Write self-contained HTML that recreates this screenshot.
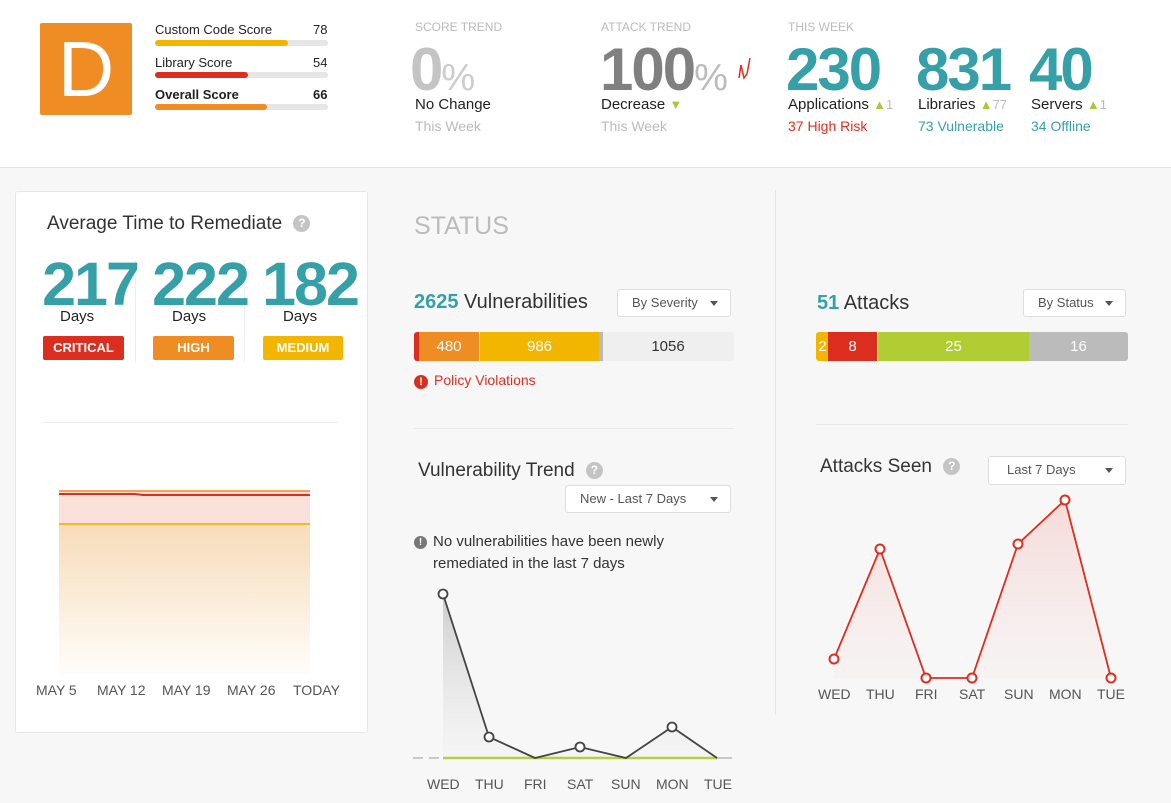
<!DOCTYPE html>
<html><head><meta charset="utf-8"><style>
*{margin:0;padding:0;box-sizing:border-box}
body{width:1171px;height:803px;background:#f7f7f7;font-family:"Liberation Sans",sans-serif;color:#333;position:relative;overflow:hidden}
.a{position:absolute;white-space:nowrap}
.hdr{position:absolute;left:0;top:0;width:1171px;height:168px;background:#fff;border-bottom:1px solid #e4e4e4}
.bar{position:absolute;height:6px;border-radius:3px;background:#e6e6e6;width:173px;left:155px}
.bar i{display:block;height:6px;border-radius:3px}
.sm{font-size:13px;color:#222}
.cap{font-size:12px;color:#bbb}
.teal{color:#35a0a8}
.big{font-size:60px;font-weight:bold;letter-spacing:-2px;line-height:60px}
.dd{position:absolute;background:#fff;border:1px solid #ddd;border-radius:3px;font-size:13px;color:#555;padding-left:14px;line-height:26px}
.dd:after{content:"";position:absolute;right:12px;top:11px;border-left:4px solid transparent;border-right:4px solid transparent;border-top:5px solid #555}
.q{display:inline-block;width:17px;height:17px;border-radius:50%;background:#c4c4c4;color:#fff;font-size:12px;font-weight:bold;text-align:center;line-height:17px;vertical-align:middle}
.badge{position:absolute;top:336px;height:24px;color:#fff;font-weight:bold;font-size:13px;text-align:center;line-height:24px;border-radius:2px}
.seg{position:absolute;top:332px;height:29px;color:#fff;font-size:15px;text-align:center;line-height:29px}
.lbl{font-size:14px;color:#555}
</style></head><body>
<div class="hdr"></div>
<div class="a" style="left:40px;top:23px;width:92px;height:92px;background:#ef8c24;border-radius:2px;color:#fff;font-size:78px;text-align:center;line-height:92px">D</div>
<div class="a sm" style="left:155px;top:22px">Custom Code Score</div><div class="a sm" style="left:313px;top:22px">78</div>
<div class="bar" style="top:40px"><i style="width:133px;background:#f2b500"></i></div>
<div class="a sm" style="left:155px;top:55px">Library Score</div><div class="a sm" style="left:313px;top:55px">54</div>
<div class="bar" style="top:72px"><i style="width:93px;background:#dc2e1f"></i></div>
<div class="a sm" style="left:155px;top:87px;font-weight:bold">Overall Score</div><div class="a sm" style="left:313px;top:87px;font-weight:bold">66</div>
<div class="bar" style="top:104px"><i style="width:112px;background:#ef8c24"></i></div>

<div class="a cap" style="left:415px;top:20px">SCORE TREND</div>
<div class="a big" style="left:410px;top:40px;color:#c4c4c4">0<span style="font-size:38px;font-weight:normal;color:#ccc">%</span></div>
<div class="a" style="left:415px;top:96px;font-size:15px;color:#222">No Change</div>
<div class="a" style="left:415px;top:118px;font-size:14px;color:#bbb">This Week</div>

<div class="a cap" style="left:601px;top:20px">ATTACK TREND</div>
<div class="a big" style="left:600px;top:40px;color:#808080">100<span style="font-size:38px;font-weight:normal;color:#bbb">%</span></div>
<svg class="a" style="left:736px;top:54px" width="20" height="28"><polyline points="3,24 5,11 8,24 11,20 14,4" fill="none" stroke="#dc2e1f" stroke-width="1.5"/></svg>
<div class="a" style="left:601px;top:96px;font-size:15px;color:#222">Decrease <span style="color:#a8c83a;font-size:13px">▼</span></div>
<div class="a" style="left:601px;top:118px;font-size:14px;color:#bbb">This Week</div>

<div class="a cap" style="left:788px;top:20px">THIS WEEK</div>
<div class="a big teal" style="left:786px;top:40px">230</div>
<div class="a big teal" style="left:916px;top:40px">831</div>
<div class="a big teal" style="left:1029px;top:40px">40</div>
<div class="a" style="left:788px;top:96px;font-size:15px;color:#222">Applications <span style="color:#a8c83a;font-size:13px">▲</span><span style="color:#bbb;font-size:13px">1</span></div>
<div class="a" style="left:918px;top:96px;font-size:15px;color:#222">Libraries <span style="color:#a8c83a;font-size:13px">▲</span><span style="color:#bbb;font-size:13px">77</span></div>
<div class="a" style="left:1031px;top:96px;font-size:15px;color:#222">Servers <span style="color:#a8c83a;font-size:13px">▲</span><span style="color:#bbb;font-size:13px">1</span></div>
<div class="a" style="left:788px;top:118px;font-size:14px;color:#dc2e1f">37 High Risk</div>
<div class="a teal" style="left:918px;top:118px;font-size:14px">73 Vulnerable</div>
<div class="a teal" style="left:1031px;top:118px;font-size:14px">34 Offline</div>

<!-- left card -->
<div class="a" style="left:15px;top:191px;width:353px;height:542px;background:#fff;border:1px solid #e6e6e6;border-radius:3px"></div>
<div class="a" style="left:47px;top:213px;font-size:19px;color:#333">Average Time to Remediate <span class="q" style="margin-left:6px">?</span></div>
<div class="a" style="left:135px;top:260px;width:1px;height:102px;background:#eee"></div>
<div class="a" style="left:244px;top:260px;width:1px;height:102px;background:#eee"></div>
<div class="a teal" style="left:40px;top:253px;width:100px;text-align:center;font-size:61px;font-weight:bold;letter-spacing:-2px;line-height:62px">217</div>
<div class="a teal" style="left:150px;top:253px;width:100px;text-align:center;font-size:61px;font-weight:bold;letter-spacing:-2px;line-height:62px">222</div>
<div class="a teal" style="left:260px;top:253px;width:100px;text-align:center;font-size:61px;font-weight:bold;letter-spacing:-2px;line-height:62px">182</div>
<div class="a" style="left:60px;top:308px;font-size:15px;color:#222">Days</div>
<div class="a" style="left:172px;top:308px;font-size:15px;color:#222">Days</div>
<div class="a" style="left:283px;top:308px;font-size:15px;color:#222">Days</div>
<div class="badge" style="left:43px;width:81px;background:#dc2e1f">CRITICAL</div>
<div class="badge" style="left:153px;width:81px;background:#ef8c24">HIGH</div>
<div class="badge" style="left:263px;width:80px;background:#f2b500">MEDIUM</div>
<div class="a" style="left:42px;top:422px;width:296px;height:1px;background:#eee"></div>
<svg class="a" style="left:59px;top:488px" width="252" height="186">
<defs><linearGradient id="og" x1="0" y1="0" x2="0" y2="1"><stop offset="0" stop-color="#f5d3a8" stop-opacity=".8"/><stop offset="1" stop-color="#f5d3a8" stop-opacity=".05"/></linearGradient></defs>
<rect x="0" y="3" width="251" height="33" fill="#f9e0d8"/>
<rect x="0" y="36" width="251" height="150" fill="url(#og)"/>
<line x1="0" y1="3" x2="251" y2="3" stroke="#ef8c24" stroke-width="1.5"/>
<polyline points="0,6 76,6 84,7 251,7" fill="none" stroke="#dc2e1f" stroke-width="2"/>
<line x1="0" y1="36" x2="251" y2="36" stroke="#f2a800" stroke-width="1.5"/>
</svg>
<div class="a lbl" style="left:36px;top:682px">MAY 5</div>
<div class="a lbl" style="left:97px;top:682px">MAY 12</div>
<div class="a lbl" style="left:162px;top:682px">MAY 19</div>
<div class="a lbl" style="left:227px;top:682px">MAY 26</div>
<div class="a lbl" style="left:293px;top:682px">TODAY</div>

<!-- status -->
<div class="a" style="left:414px;top:212px;font-size:25px;color:#bbb">STATUS</div>
<div class="a" style="left:414px;top:291px;font-size:20px;color:#333"><b class="teal">2625</b> Vulnerabilities</div>
<div class="dd" style="left:617px;top:289px;width:114px;height:28px">By Severity</div>
<div class="seg" style="left:414px;width:606px;width:320px;background:#efefef;border-radius:3px"></div>
<div class="seg" style="left:414px;width:6px;background:#dc2e1f;border-radius:3px 0 0 3px"></div>
<div class="seg" style="left:419px;width:60px;background:#ef8c24">480</div>
<div class="seg" style="left:480px;width:119px;background:#f2b500">986</div>
<div class="seg" style="left:599px;width:4px;background:#bbb"></div>
<div class="seg" style="left:603px;width:130px;color:#333">1056</div>
<div class="a" style="left:414px;top:372px;font-size:14px;color:#dc2e1f"><span style="display:inline-block;width:14px;height:14px;border-radius:50%;background:#dc2e1f;color:#fff;font-size:11px;font-weight:bold;text-align:center;line-height:14px;margin-right:6px">!</span>Policy Violations</div>
<div class="a" style="left:414px;top:428px;width:320px;height:1px;background:#e8e8e8"></div>
<div class="a" style="left:418px;top:460px;font-size:19px;color:#333">Vulnerability Trend <span class="q" style="margin-left:6px">?</span></div>
<div class="dd" style="left:565px;top:485px;width:166px;height:28px">New - Last 7 Days</div>
<div class="a" style="left:414px;top:531px;font-size:15px;color:#333;line-height:22px"><span style="display:inline-block;width:13px;height:13px;border-radius:50%;background:#777;color:#fff;font-size:10px;font-weight:bold;text-align:center;line-height:13px;margin-right:6px;vertical-align:1px">!</span>No vulnerabilities have been newly<br><span style="padding-left:19px">remediated in the last 7 days</span></div>
<svg class="a" style="left:400px;top:580px" width="340" height="190">
<defs><linearGradient id="gg" x1="0" y1="0" x2="0" y2="1"><stop offset="0" stop-color="#bbb" stop-opacity=".7"/><stop offset="1" stop-color="#ddd" stop-opacity=".1"/></linearGradient>
<linearGradient id="rg" x1="0" y1="0" x2="0" y2="1"><stop offset="0" stop-color="#f3c8c4" stop-opacity=".6"/><stop offset="1" stop-color="#f3dcda" stop-opacity=".15"/></linearGradient></defs>
<polygon points="43,14 89,157 135,178 180,167 226,178 272,147 317,178 43,178" fill="url(#gg)"/>
<line x1="13" y1="178" x2="43" y2="178" stroke="#999" stroke-dasharray="10,6"/>
<line x1="317" y1="178" x2="332" y2="178" stroke="#999"/>
<line x1="43" y1="178" x2="317" y2="178" stroke="#b5cf3e" stroke-width="2.5"/>
<polyline points="43,14 89,157 135,178 180,167 226,178 272,147 317,178" fill="none" stroke="#444" stroke-width="1.8"/>
<g fill="#fff" stroke="#444" stroke-width="1.8"><circle cx="43" cy="14" r="4.5"/><circle cx="89" cy="157" r="4.5"/><circle cx="180" cy="167" r="4.5"/><circle cx="272" cy="147" r="4.5"/></g>
</svg>
<div class="a lbl" style="left:427px;top:776px">WED</div>
<div class="a lbl" style="left:475px;top:776px">THU</div>
<div class="a lbl" style="left:524px;top:776px">FRI</div>
<div class="a lbl" style="left:567px;top:776px">SAT</div>
<div class="a lbl" style="left:611px;top:776px">SUN</div>
<div class="a lbl" style="left:656px;top:776px">MON</div>
<div class="a lbl" style="left:704px;top:776px">TUE</div>

<div class="a" style="left:775px;top:190px;width:1px;height:525px;background:#e4e4e4"></div>

<!-- attacks -->
<div class="a" style="left:817px;top:292px;font-size:20px;color:#333"><b class="teal">51</b> Attacks</div>
<div class="dd" style="left:1023px;top:289px;width:103px;height:28px">By Status</div>
<div class="seg" style="left:816px;width:13px;background:#f2b500;border-radius:3px 0 0 3px">2</div>
<div class="seg" style="left:828px;width:49px;background:#dc2e1f">8</div>
<div class="seg" style="left:878px;width:151px;background:#b2cd33">25</div>
<div class="seg" style="left:1029px;width:99px;background:#bbb;border-radius:0 3px 3px 0">16</div>
<div class="a" style="left:816px;top:424px;width:312px;height:1px;background:#e8e8e8"></div>
<div class="a" style="left:820px;top:456px;font-size:19px;color:#333">Attacks Seen <span class="q" style="margin-left:6px">?</span></div>
<div class="dd" style="left:988px;top:456px;width:138px;height:29px;padding-left:18px">Last 7 Days</div>
<svg class="a" style="left:800px;top:480px" width="340" height="210">
<polygon points="34,179 80,69 126,198 172,198 218,64 265,20 311,198 34,198" fill="url(#rg)"/>
<polyline points="34,179 80,69 126,198 172,198 218,64 265,20 311,198" fill="none" stroke="#dc2e1f" stroke-width="1.8"/>
<g fill="#fff" stroke="#dc2e1f" stroke-width="2"><circle cx="34" cy="179" r="4.5"/><circle cx="80" cy="69" r="4.5"/><circle cx="126" cy="198" r="4.5"/><circle cx="172" cy="198" r="4.5"/><circle cx="218" cy="64" r="4.5"/><circle cx="265" cy="20" r="4.5"/><circle cx="311" cy="198" r="4.5"/></g>
</svg>
<div class="a lbl" style="left:818px;top:686px">WED</div>
<div class="a lbl" style="left:866px;top:686px">THU</div>
<div class="a lbl" style="left:915px;top:686px">FRI</div>
<div class="a lbl" style="left:959px;top:686px">SAT</div>
<div class="a lbl" style="left:1004px;top:686px">SUN</div>
<div class="a lbl" style="left:1049px;top:686px">MON</div>
<div class="a lbl" style="left:1097px;top:686px">TUE</div>
</body></html>
